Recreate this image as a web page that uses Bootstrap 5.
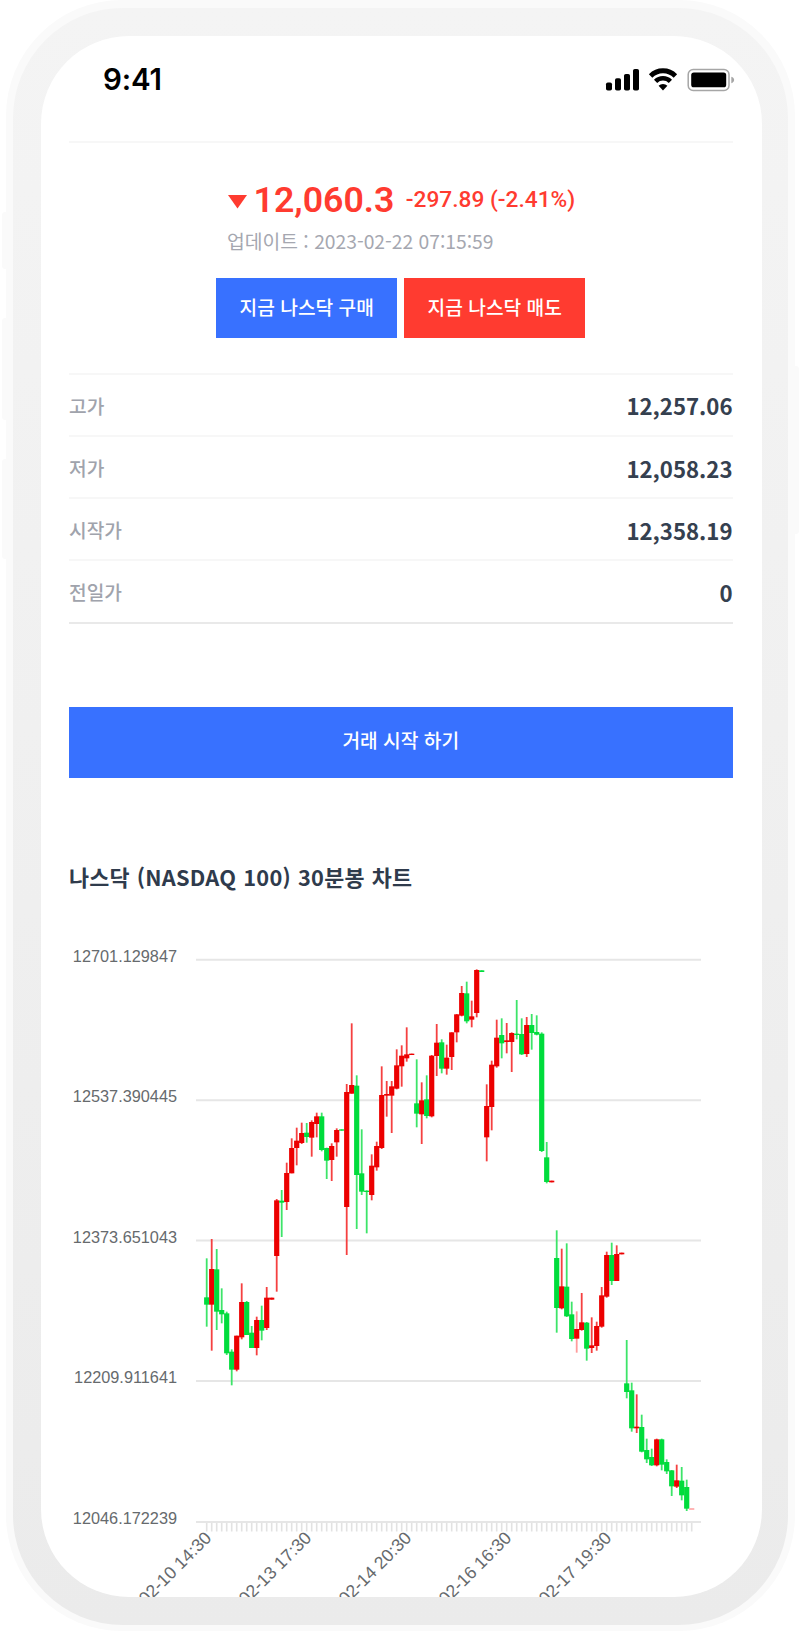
<!DOCTYPE html>
<html lang="ko">
<head>
<meta charset="utf-8">
<meta name="viewport" content="width=device-width, initial-scale=1">
<title>나스닥 100</title>
<link href="https://cdn.jsdelivr.net/npm/bootstrap@5.3.0/dist/css/bootstrap.min.css" rel="stylesheet">
<style>
body{font-family:"Noto Sans CJK KR",sans-serif;background:#fff;color:#2f3b4c;width:800px;height:1633px;overflow:hidden}
.phone-shell{width:789px;height:1631px;margin-left:6px;padding:8px 7px 6px;background:#fafafa;border-radius:116px}
.phone-band{height:1617px;padding:27.5px 26px 28px 28px;border-radius:110px;background:linear-gradient(#f4f4f4,#ebebeb)}
.phone-screen{height:1561.5px;border-radius:88px;background:#fff;overflow:hidden}
.side-key{position:absolute;width:5px;background:#fafafa;border-radius:3px 0 0 3px}
.side-key.key-r{border-radius:0 3px 3px 0}
.status-bar{height:105px;padding:29.5px 27px 0 62px}
.status-bar svg{margin-top:2.5px}
.clock{font:600 29.5px/1 Inter,sans-serif;color:#000;letter-spacing:-.2px}
.content{padding:0 29.5px 0 28px}
.quote{height:234px;border-top:2px solid #f7f7f7;border-bottom:2px solid #f7f7f7}
.price-line{color:#ff3b30;font-family:Roboto,sans-serif;font-weight:500;padding:31px 0 0 159px;height:83px;white-space:nowrap}
.price{font-size:35.7px;line-height:42px;margin-left:6.5px;font-weight:600}
.change{font-size:22.7px;line-height:42px;margin-left:11.5px}
.updated{color:#a5a7b0;font-size:19.3px;line-height:28px;padding-left:158px;white-space:nowrap;padding-top:1px}
.trade-btns{padding-top:23.5px;gap:6.7px}
.btn-trade{--bs-btn-color:#fff;--bs-btn-border-width:0;--bs-btn-padding-x:0;--bs-btn-padding-y:0;--bs-btn-border-radius:0;--bs-btn-font-size:19.2px;--bs-btn-font-weight:500;color:#fff;white-space:nowrap}
.btn-buy{background:#3871ff}.btn-sell{background:#ff3b30}
.btn-half{width:181.3px;height:59.5px}
.btn-main{height:71px;margin-top:83px;padding-bottom:3px}
.stat-row{height:62.3px;border-bottom:2px solid #f7f7f7;font-size:19.2px;color:#a0a3ac;font-weight:500;padding-top:2.5px}
.stat-row:last-child{border-color:#e9e9e9}
.stat-row b{font-size:22.2px;font-weight:700;color:#35404f}
.chart-title{font-size:21.8px;font-weight:700;line-height:34px;margin:82px 0 0;white-space:nowrap;letter-spacing:.2px;word-spacing:.8px}
.chart-box{display:block;margin:24.5px 0 0 -28px;width:721px;height:680px}
.chart-box text{font-family:"Liberation Sans",sans-serif;font-size:16.3px;fill:#666a6d}
.chart-box .tick-date{font-size:17.6px}
</style>
</head>
<body>
<span class="side-key" style="left:2px;top:212px;height:57px"></span>
<span class="side-key" style="left:2px;top:318px;height:102px"></span>
<span class="side-key" style="left:2px;top:459px;height:100px"></span>
<span class="side-key key-r" style="left:794px;top:366px;height:168px"></span>
<div class="phone-shell"><div class="phone-band"><main class="phone-screen">
  <header class="status-bar d-flex justify-content-between align-items-start">
    <span class="clock">9:41</span>
    <svg width="130" height="24" viewBox="605 68 130 24" role="img" aria-label="signal">
      <rect x="606" y="82.5" width="6" height="8" rx="1.8"/><rect x="615" y="78.3" width="6" height="12.2" rx="1.8"/><rect x="624" y="74" width="6" height="16.5" rx="1.8"/><rect x="633" y="69" width="6" height="21.5" rx="1.8"/>
      <path d="M650.6 76a17.3 17.3 0 0 1 24.8 0" fill="none" stroke="#000" stroke-width="4.8"/>
      <path d="M655.6 81.300a10.6 10.6 0 0 1 14.800 0" fill="none" stroke="#000" stroke-width="4.6"/>
      <path d="M663 90.4l-4.4-4.6a6.200 6.200 0 0 1 8.800 0z"/>
      <rect x="688.2" y="69.600" width="40.8" height="20.8" rx="5" fill="none" stroke="#a6a6a6" stroke-width="1.5"/>
      <rect x="691.2" y="72.5" width="35" height="14.8" rx="2.6"/>
      <path d="M731.3 76.8c3.8 1.2 3.8 5.2 0 6.4z" fill="#a6a6a6"/>
    </svg>
  </header>
  <div class="content">
    <section class="quote">
      <div class="price-line d-flex align-items-center">
        <svg width="19" height="14" viewBox="0 0 19 14" class="mt-1"><path d="M0 0h19L9.500 13.500z" fill="#ff3b30"/></svg>
        <span class="price">12,060.3</span><span class="change">-297.89 (-2.41%)</span>
      </div>
      <div class="updated">업데이트 : 2023-02-22 07:15:59</div>
      <div class="trade-btns d-flex justify-content-center">
        <button class="btn btn-trade btn-buy btn-half">지금 나스닥 구매</button>
        <button class="btn btn-trade btn-sell btn-half">지금 나스닥 매도</button>
      </div>
    </section>
    <section>
      <div class="stat-row d-flex justify-content-between align-items-center"><span>고가</span><b>12,257.06</b></div>
      <div class="stat-row d-flex justify-content-between align-items-center"><span>저가</span><b>12,058.23</b></div>
      <div class="stat-row d-flex justify-content-between align-items-center"><span>시작가</span><b>12,358.19</b></div>
      <div class="stat-row d-flex justify-content-between align-items-center"><span>전일가</span><b>0</b></div>
    </section>
    <button class="btn btn-trade btn-buy btn-main w-100">거래 시작 하기</button>
    <h2 class="chart-title">나스닥 (NASDAQ 100) 30분봉 차트</h2>
    <svg class="chart-box" id="chart" viewBox="41 918 721 680"></svg>
  </div>
</main></div></div>
<script src="https://cdn.jsdelivr.net/npm/bootstrap@5.3.0/dist/js/bootstrap.bundle.min.js"></script>
<script>
// Each group: vertical origin, then candles as colour, high, body top, body bottom, low (thirds of a pixel)
const groups=[
[1080,`g535,652,674,740 r477,567,674,812 g507,568,695,750 g625,690,703,730 g695,700,820,825 g808,815,869,916 r767,767,869,874 r610,666,772,778 g663,666,765,765 g738,758,804,804 r710,720,804,826 g677,720,752,781 r621,653,744,750 r653,653,659,659 r357,361,528,635 g330,362,368,471 r248,279,366,390 r175,204,280,280 r143,182,204,256 r128,159,189,192 g129,158,171,188 r121,126,173,230 r98,109,132,172 g98,109,210,214 g203,204,242,297 r190,198,240,303 r145,150,187,230 g148,148,152,152`],
[950,`r402,426,771,915 r220,405,431,431 g376,407,675,837 g538,670,725,735 g721,722,726,850 r613,647,735,751 r575,588,652,662 r349,435,594,597 r393,432,437,500 r393,409,437,549 r298,346,416,418 r286,317,349,410 r232,313,325,335 r311,311,315,315 g328,460,491,532 r397,451,493,582 g376,448,498,505 r315,317,499,502 r222,278,318,378 g268,277,356,370 r284,323,356,374 r247,247,321,360 r192,193,247,277 r108,129,197,199 g95,130,214,220 r152,199,209,232 r58,60,189,202 g61,61,66,66 r403,468,562,634 r332,344,471,541 r209,263,349,353 g205,255,280,325 r219,271,276,310 r247,249,276,366 g150,251,255,268 g205,252,313,315 r201,225,312,321 g192,225,249,299 g196,246,254,256 g247,251,603,606 g576,622,696,700 r692,692,697,697`],
[1210,`g61,144,294,368 r116,229,295,298 g100,230,319,321 g275,313,387,394 p304,357,386,428 r249,337,360,362 g336,338,416,452 r322,406,414,429 r335,348,408,422 r231,256,350,353 r125,135,260,263 g98,135,213,225 r106,132,213,213 r128,128,133,133 g390,520,546,565 g518,541,655,665 r553,650,655,669 g614,651,725,727 g686,720,748,759 g716,741,766,768 r686,688,766,769 g686,688,764,781 g748,756,784,792 g780,781,829,858 r764,811,830,834 g771,812,856,871 g809,831,896,903 l894,894,900,900`]];
const body={g:'#00dc3c',r:'#ec0000',p:'#ec0000',l:'#ffb5b5'},wick={g:'#3de469',r:'#f54040',p:'#ff9c9c',l:'#ffb5b5'};
let out='';
[[959.7,'12701.129847'],[1100.2,'12537.390445'],[1240.6,'12373.651043'],[1380.9,'12209.911641'],[1521.9,'12046.172239']].forEach(([y,t])=>{
  out+=`<path d="M196 ${y}H701" stroke="#e6e6e6" stroke-width="2"/><text x="177" y="${y+2}" text-anchor="end">${t}</text>`;
});
for(let i=0;i<98;i++)out+=`<path d="M${206.7+5*i} 1523v8.500" stroke="#e2e2e2" stroke-width="1.6"/>`;
['02-10 14:30','02-13 17:30','02-14 20:30','02-16 16:30','02-17 19:30'].forEach((t,i)=>{
  out+=`<text class="tick-date" text-anchor="end" transform="translate(${212.4+100*i} 1539) rotate(-45)">${t}</text>`;
});
let i=0;
for(const [y0,s] of groups)for(const c of s.split(' ')){
  const k=c[0],[h,a,b,l]=c.slice(1).split(',').map(v=>y0+v/3),x=206.7+5*i++;
  out+=`<rect x="${x-.9}" y="${h}" width="1.8" height="${l-h}" fill="${wick[k]}"/><rect x="${x-2.6}" y="${a}" width="5.2" height="${b-a}" fill="${body[k]}"/>`;
}
document.getElementById('chart').innerHTML=out;
</script>
</body>
</html>
